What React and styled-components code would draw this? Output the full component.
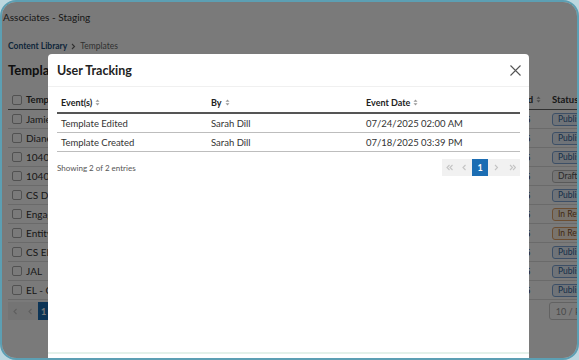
import React from "react";
import styled, { createGlobalStyle } from "styled-components";

const GlobalStyle = createGlobalStyle`
  html, body {
    margin: 0;
    padding: 0;
    background: #bcd7df;
    font-family: Lato, "Noto Sans", sans-serif;
  }
  * { box-sizing: border-box; }
`;

const Frame = styled.div`
  position: relative;
  width: 579px;
  height: 360px;
  border: 2px solid #5c9fb3;
  border-radius: 16px;
  overflow: hidden;
  background: #fff;
`;

/* ---------- page behind the dialog ---------- */

const TopBar = styled.div`
  height: 30px;
  display: flex;
  align-items: center;
  padding-left: 1px;
  font-size: 10px;
  color: #333;
`;

const Page = styled.div`
  padding: 6px 0 0 6px;
`;

const Crumbs = styled.div`
  display: flex;
  align-items: center;
  gap: 4px;
  height: 16px;
  font-size: 8.5px;
  color: #666;
`;

const CrumbLink = styled.span`
  color: #1d4f7a;
  font-weight: 700;
`;

const PageTitle = styled.h1`
  margin: 7px 0 0;
  height: 18px;
  line-height: 18px;
  font-size: 13px;
  font-weight: 700;
  color: #222;
`;

const ListTable = styled.div`
  width: 612px;
  margin-top: 11px;
`;

const ListRow = styled.div`
  display: grid;
  grid-template-columns: 1fr 79px 71px;
  align-items: center;
  height: ${(p) => (p.$head ? "20px" : "19px")};
  border-bottom: 1px solid ${(p) => (p.$head ? "#666" : "#ddd")};
  padding-left: 4px;
  font-size: ${(p) => (p.$head ? "9.5px" : "10px")};
  font-weight: ${(p) => (p.$head ? 700 : 400)};
  color: #333;
`;

const NameCell = styled.div`
  display: flex;
  align-items: center;
  gap: 4px;
`;

const Box = styled.span`
  width: 10px;
  height: 10px;
  border: 1px solid #aaa;
  border-radius: 2px;
  background: #fff;
`;

const Cell = styled.div`
  display: flex;
  align-items: center;
  gap: 3px;
  padding-left: ${(p) => p.$pl || 0}px;
  white-space: nowrap;
`;

const badgeTones = {
  pub: { bg: "#e8f1fb", bd: "#7fa6d6", fg: "#2f5f98" },
  rev: { bg: "#fdf0e2", bd: "#e1a46a", fg: "#8a5426" },
  draft: { bg: "#f5f5f5", bd: "#bbb", fg: "#555" },
};

const Badge = styled.span`
  display: inline-flex;
  align-items: center;
  height: 13px;
  padding: 0 5px;
  border-radius: 3px;
  font-size: 8.5px;
  background: ${(p) => badgeTones[p.$tone].bg};
  border: 1px solid ${(p) => badgeTones[p.$tone].bd};
  color: ${(p) => badgeTones[p.$tone].fg};
`;

const PageFoot = styled.div`
  display: flex;
  align-items: center;
  justify-content: space-between;
  height: 18px;
  margin-top: 2px;
`;

const PagerGroup = styled.div`
  display: flex;
  height: ${(p) => p.$h || 18}px;
  background: ${(p) => p.$bg || "#f3f3f3"};
`;

const PagerBtn = styled.span`
  width: ${(p) => p.$w || 15}px;
  display: flex;
  align-items: center;
  justify-content: center;
  font-size: 9px;
  font-weight: 700;
  color: ${(p) => (p.$active ? "#fff" : "#c4c4c4")};
  background: ${(p) => (p.$active ? "#1b6db3" : "transparent")};
`;

const SizeSelect = styled.span`
  display: flex;
  align-items: center;
  height: 18px;
  margin-right: -24px;
  padding: 0 6px;
  border: 1px solid #ccc;
  border-radius: 3px;
  font-size: 9px;
  color: #999;
  white-space: nowrap;
`;

/* ---------- dialog ---------- */

const Overlay = styled.div`
  position: absolute;
  inset: 0;
  display: flex;
  justify-content: center;
  align-items: flex-start;
  padding-top: 52px;
  background: rgba(0, 0, 0, 0.52);
`;

const Modal = styled.div`
  width: 481px;
  height: 328px;
  margin-left: -2px;
  display: flex;
  flex-direction: column;
  flex-shrink: 0;
  background: #fff;
  border-radius: 4px 4px 0 0;
`;

const ModalHead = styled.div`
  display: flex;
  align-items: center;
  justify-content: space-between;
  height: 33px;
  padding: 0 8px 0 9px;
  border-bottom: 1px solid #f0f0f0;
`;

const ModalTitle = styled.h2`
  margin: 0;
  font-size: 12.5px;
  font-weight: 700;
  color: #222;
`;

const CloseBtn = styled.button`
  display: flex;
  padding: 0;
  border: 0;
  background: none;
  color: #555;
`;

const ModalBody = styled.div`
  flex: 1;
  padding: 6px 9px 0;
`;

const TrackRow = styled.div`
  display: grid;
  grid-template-columns: 150px 155px 1fr;
  align-items: center;
  height: ${(p) => (p.$head ? "21px" : "19px")};
  border-bottom: ${(p) => (p.$head ? "2px solid #555" : "1px solid #bdbdbd")};
  font-size: ${(p) => (p.$head ? "9px" : "9.5px")};
  font-weight: ${(p) => (p.$head ? 700 : 400)};
  color: ${(p) => (p.$head ? "#222" : "#333")};
`;

const TrackCell = styled.div`
  display: flex;
  align-items: center;
  gap: 3px;
  padding-left: 4px;
`;

const InfoRow = styled.div`
  display: flex;
  align-items: center;
  justify-content: space-between;
  margin-top: 7px;
`;

const Info = styled.span`
  font-size: 8px;
  color: #555;
`;

const ModalFoot = styled.div`
  height: 30px;
  border-top: 2px solid #e4f1ea;
`;

const SortIcon = () => (
  <svg width="5" height="7" viewBox="0 0 5 7" fill="#999">
    <path d="M2.5 0.5 L4.5 2.8 H0.5 Z" />
    <path d="M2.5 6.5 L4.5 4.2 H0.5 Z" />
  </svg>
);

const Chevron = ({ dir, double }) => (
  <svg width={double ? 7 : 5} height="7" viewBox={double ? "0 0 7 7" : "0 0 5 7"} fill="none" stroke="currentColor" strokeWidth="1.1">
    {dir === "left" ? (
      <>
        <path d="M3.5 1 L1 3.5 L3.5 6" />
        {double && <path d="M6.5 1 L4 3.5 L6.5 6" />}
      </>
    ) : (
      <>
        <path d="M1 1 L3.5 3.5 L1 6" />
        {double && <path d="M4 1 L6.5 3.5 L4 6" />}
      </>
    )}
  </svg>
);

const templates = [
  ["Jamie Template", "pub", "Published"],
  ["Diane Engagement", "pub", "Published"],
  ["1040 Individual", "pub", "Published"],
  ["1040 Business", "draft", "Draft"],
  ["CS Document", "pub", "Published"],
  ["Engagement Letter", "rev", "In Review"],
  ["Entity Setup", "rev", "In Review"],
  ["CS EL", "pub", "Published"],
  ["JAL", "pub", "Published"],
  ["EL - Client", "pub", "Published"],
];

const events = [
  ["Template Edited", "Sarah Dill", "07/24/2025 02:00 AM"],
  ["Template Created", "Sarah Dill", "07/18/2025 03:39 PM"],
];

export default function App() {
  return (
    <>
      <GlobalStyle />
      <Frame>
        <TopBar>Associates - Staging</TopBar>
        <Page>
          <Crumbs>
            <CrumbLink>Content Library</CrumbLink>
            <Chevron dir="right" />
            <span>Templates</span>
          </Crumbs>
          <PageTitle>Templates</PageTitle>
          <ListTable>
            <ListRow $head>
              <NameCell>
                <Box />
                Template Name
              </NameCell>
              <Cell $pl={5}>
                Last Modified <SortIcon />
              </Cell>
              <Cell $pl={3}>Status</Cell>
            </ListRow>
            {templates.map(([name, tone, label]) => (
              <ListRow key={name}>
                <NameCell>
                  <Box />
                  {name}
                </NameCell>
                <Cell $pl={5}>07/24/2025</Cell>
                <Cell $pl={3}>
                  <Badge $tone={tone}>{label}</Badge>
                </Cell>
              </ListRow>
            ))}
          </ListTable>
          <PageFoot>
            <PagerGroup>
              <PagerBtn>
                <Chevron dir="left" />
              </PagerBtn>
              <PagerBtn>
                <Chevron dir="left" />
              </PagerBtn>
              <PagerBtn $active $w={11}>1</PagerBtn>
            </PagerGroup>
            <SizeSelect>10 / Page</SizeSelect>
          </PageFoot>
        </Page>

        <Overlay>
          <Modal>
            <ModalHead>
              <ModalTitle>User Tracking</ModalTitle>
              <CloseBtn aria-label="Close">
                <svg width="11" height="11" viewBox="0 0 11 11" stroke="currentColor" strokeWidth="1.1">
                  <path d="M0.5 0.5 L10.5 10.5 M10.5 0.5 L0.5 10.5" />
                </svg>
              </CloseBtn>
            </ModalHead>
            <ModalBody>
              <TrackRow $head>
                <TrackCell>
                  Event(s) <SortIcon />
                </TrackCell>
                <TrackCell>
                  By <SortIcon />
                </TrackCell>
                <TrackCell>
                  Event Date <SortIcon />
                </TrackCell>
              </TrackRow>
              {events.map(([ev, by, date]) => (
                <TrackRow key={ev}>
                  <TrackCell>{ev}</TrackCell>
                  <TrackCell>{by}</TrackCell>
                  <TrackCell>{date}</TrackCell>
                </TrackRow>
              ))}
              <InfoRow>
                <Info>Showing 2 of 2 entries</Info>
                <PagerGroup $h={17} $bg="#f1f1f1">
                  <PagerBtn $w={15}>
                    <Chevron dir="left" double />
                  </PagerBtn>
                  <PagerBtn $w={15}>
                    <Chevron dir="left" />
                  </PagerBtn>
                  <PagerBtn $active $w={16}>1</PagerBtn>
                  <PagerBtn $w={16}>
                    <Chevron dir="right" />
                  </PagerBtn>
                  <PagerBtn $w={16}>
                    <Chevron dir="right" double />
                  </PagerBtn>
                </PagerGroup>
              </InfoRow>
            </ModalBody>
            <ModalFoot />
          </Modal>
        </Overlay>
      </Frame>
    </>
  );
}
